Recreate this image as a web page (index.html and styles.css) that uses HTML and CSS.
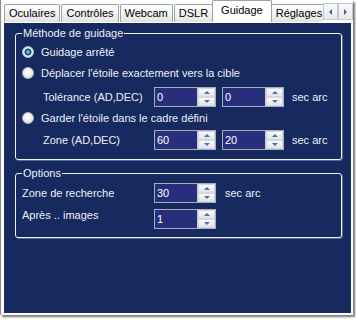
FILE: index.html
```html
<!DOCTYPE html>
<html lang="fr">
<head>
<meta charset="utf-8">
<link rel="stylesheet" href="styles.css">
</head>
<body>
<div class="frame">
  <div class="tabbar">
    <div class="tabs">
      <div class="tab">Oculaires</div>
      <div class="tab">Contrôles</div>
      <div class="tab">Webcam</div>
      <div class="tab">DSLR</div>
      <div class="tab active">Guidage</div>
      <div class="tab">Réglages</div>
    </div>
    <div class="scroll">
      <span class="sbtn"><i class="tri-left"></i></span>
      <span class="sbtn"><i class="tri-right"></i></span>
    </div>
  </div>
  <div class="panel">
    <div class="group g1">
      <div class="legend">Méthode de guidage</div>
      <div class="row r1"><span class="radio on"></span><span>Guidage arrêté</span></div>
      <div class="row r2"><span class="radio"></span><span>Déplacer l'étoile exactement vers la cible</span></div>
      <div class="row r3 sub">
        <span class="lbl">Tolérance (AD,DEC)</span>
        <div class="num"><span class="val">0</span><span class="spin"><span class="up"><i></i></span><span class="down"><i></i></span></span></div>
        <div class="num second"><span class="val">0</span><span class="spin"><span class="up"><i></i></span><span class="down"><i></i></span></span></div>
        <span class="unit">sec arc</span>
      </div>
      <div class="row r4"><span class="radio"></span><span>Garder l'étoile dans le cadre défini</span></div>
      <div class="row r5 sub">
        <span class="lbl">Zone (AD,DEC)</span>
        <div class="num"><span class="val">60</span><span class="spin"><span class="up"><i></i></span><span class="down"><i></i></span></span></div>
        <div class="num second"><span class="val">20</span><span class="spin"><span class="up"><i></i></span><span class="down"><i></i></span></span></div>
        <span class="unit">sec arc</span>
      </div>
    </div>
    <div class="group g2">
      <div class="legend">Options</div>
      <div class="row o1">
        <span class="lbl wide">Zone de recherche</span>
        <div class="num"><span class="val">30</span><span class="spin"><span class="up"><i></i></span><span class="down"><i></i></span></span></div>
        <span class="unit near">sec arc</span>
      </div>
      <div class="row o2">
        <span class="lbl wide high">Après .. images</span>
        <div class="num"><span class="val">1</span><span class="spin"><span class="up"><i></i></span><span class="down"><i></i></span></span></div>
      </div>
    </div>
  </div>
</div>
</body>
</html>
```

FILE: styles.css
```css
* { box-sizing: border-box; }
html, body { margin: 0; padding: 0; background: #ffffff; }
body {
  font-family: "Liberation Sans", Arial, sans-serif;
  font-size: 11px;
  width: 356px;
  height: 321px;
  overflow: hidden;
}
.frame {
  width: 353px;
  height: 315px;
  border-left: 1px solid #8e8e8e;
  padding-left: 1px;
  background: #f4f4f4;
  box-shadow: 2px 2px 2px rgba(0,0,0,0.55);
  display: flex;
  flex-direction: column;
}
.tabbar {
  height: 22px;
  display: flex;
  align-items: flex-end;
  padding-left: 2px;
  background: #ffffff;
}
.tabs {
  display: flex;
  align-items: flex-end;
  width: 319px;
  height: 22px;
  overflow: hidden;
}
.tab {
  height: 18px;
  line-height: 17px;
  padding: 0 4px;
  margin-right: 1px;
  border: 1px solid #9aa2a8;
  border-bottom: none;
  border-radius: 2px 2px 0 0;
  background: linear-gradient(#fefefe, #f0f0ee 60%, #e2e2de);
  color: #000;
  white-space: nowrap;
  flex: none;
}
.tab.active {
  height: 23px;
  line-height: 19px;
  padding: 0 8px;
  margin: 0 -1px -1px -2px;
  background: #ffffff;
  position: relative;
  z-index: 2;
}
.scroll {
  display: flex;
  margin-bottom: 2px;
}
.sbtn {
  width: 15px;
  height: 17px;
  border: 1px solid #c4c8cc;
  background: linear-gradient(#fafafa, #e6e8ea);
  display: flex;
  align-items: center;
  justify-content: center;
}
.tri-left, .tri-right {
  width: 0; height: 0;
  border-top: 3px solid transparent;
  border-bottom: 3px solid transparent;
}
.tri-left { border-right: 3px solid #4a5f90; }
.tri-right { border-left: 3px solid #4a5f90; }

.panel {
  flex: 1;
  background: #162a60;
  border: 2px solid #ffffff;
  border-top-width: 1px;
  padding: 10px 0 0 11px;
  color: #eef0f6;
}
.group {
  width: 327px;
  border: 1px solid #f2f3f7;
  border-radius: 3px;
  box-shadow: 1px 1px 0 rgba(170,180,210,0.45);
  display: flex;
  flex-direction: column;
  padding: 0 0 9px 6px;
}
.g2 { margin-top: 13px; padding-bottom: 8px; }
.legend {
  align-self: flex-start;
  margin-top: -8px;
  margin-left: 0;
  padding: 0 1px;
  height: 14px;
  line-height: 14px;
  background: #162a60;
}
.row {
  display: flex;
  align-items: center;
  height: 20px;
  white-space: nowrap;
}
.r1 { margin-top: 2px; }
.r2 { margin-top: 1px; }
.r3 { margin-top: 4px; }
.r4 { margin-top: 1px; }
.r5 { margin-top: 2px; }
.o1 { margin-top: 3px; }
.o2 { margin-top: 6px; }
.sub { padding-left: 21px; }
.lbl { width: 111px; flex: none; }
.lbl.wide { width: 132px; }
.lbl.high { align-self: flex-start; padding-top: 0; }
.radio {
  width: 12px;
  height: 12px;
  border-radius: 50%;
  border: 1px solid #b4b8c0;
  background: radial-gradient(circle at 45% 40%, #ffffff 0, #eeeeee 45%, #cfd2d6 100%);
  margin-right: 7px;
  flex: none;
}
.radio.on {
  background: radial-gradient(circle at 50% 50%, #c8f4ff 0, #3aaae6 1.2px, #0d4f96 2.6px, #28406e 3.2px, #e6e6e6 3.8px, #f2f2f2 4.2px, #cfd2d6 100%);
}
.num {
  width: 62px;
  height: 20px;
  border: 1px solid #a9aebb;
  background: #272f7c;
  display: flex;
  flex: none;
}
.num.second { margin-left: 6px; }
.val {
  flex: 1;
  padding-left: 2px;
  line-height: 18px;
  color: #ffffff;
  font-size: 11px;
}
.spin {
  width: 18px;
  display: flex;
  flex-direction: column;
  border-left: 1px solid #c8ccd4;
}
.spin .up, .spin .down {
  flex: 1;
  display: flex;
  align-items: center;
  justify-content: center;
  background: linear-gradient(#fbfbfc, #e2e4ea);
  border: 1px solid #d4d7de;
}
.spin .up i {
  width: 0; height: 0;
  border-left: 3px solid transparent;
  border-right: 3px solid transparent;
  border-bottom: 3px solid #5170a8;
}
.spin .down i {
  width: 0; height: 0;
  border-left: 3px solid transparent;
  border-right: 3px solid transparent;
  border-top: 3px solid #5170a8;
}
.unit { margin-left: 8px; }
.unit.near { margin-left: 9px; }
```
